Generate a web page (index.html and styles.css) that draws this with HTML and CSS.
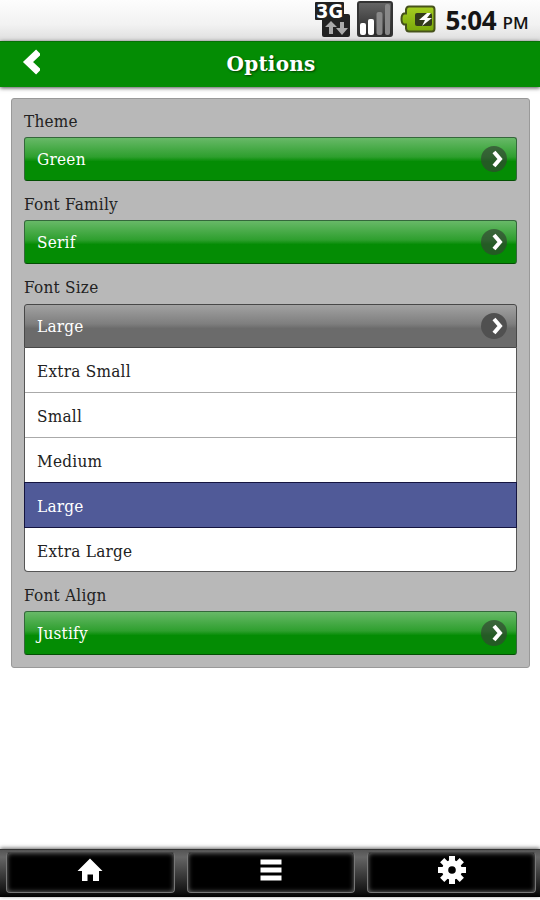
FILE: index.html
```
<!DOCTYPE html>
<html>
<head>
    <meta charset="utf-8">
    <title>Options</title>
    <meta name="viewport" content="width=device-width, initial-scale=1">
    <link rel="stylesheet" href="styles.css">
</head>
<body>
    <div class="status-bar">
        <svg class="network" width="36" height="38" viewBox="0 0 36 38">
            <rect x="8" y="14" width="28" height="23" rx="2" fill="#222"/>
            <rect x="1" y="2" width="29" height="18" rx="1" fill="#222"/>
            <text x="2" y="17.500" textLength="27" lengthAdjust="spacingAndGlyphs">3G</text>
            <path d="M17 21l6 6h-4v7h-4v-7h-4zM26 22h4v6h4l-6 7-6-7h4z" fill="#aaa"/>
        </svg>
        <svg class="signal" width="36" height="36" viewBox="0 0 36 36">
            <defs>
                <linearGradient id="signalBg" x2="0" y2="1">
                    <stop offset="0" stop-color="#666"/>
                    <stop offset="1" stop-color="#262626"/>
                </linearGradient>
            </defs>
            <rect x="1" y="1" width="34" height="34" rx="2" fill="url(#signalBg)" stroke="#333" stroke-width="2"/>
            <rect x="3" y="22" width="6" height="12" rx="2" fill="#fff"/>
            <rect x="11" y="18" width="6" height="16" rx="2" fill="#fff"/>
            <rect x="19.5" y="11" width="6" height="23" rx="2" fill="#888"/>
            <rect x="28" y="3" width="5" height="31" rx="2" fill="#888"/>
        </svg>
        <svg class="battery" width="36" height="28" viewBox="0 0 36 28">
            <defs>
                <linearGradient id="batteryBg" x2="0" y2="1">
                    <stop offset="0" stop-color="#a6ce22"/>
                    <stop offset="1" stop-color="#79a80a"/>
                </linearGradient>
            </defs>
            <path d="M9 1.500h23q2.500 0 2.500 3v19q0 3-2.500 3H9q-2.500 0-3-3v-4H4q-2.500-1-2.500-5.500T4 8.500h2v-4q.5-3 3-3z" fill="url(#batteryBg)" stroke="#46521b" stroke-width="2"/>
            <rect x="15" y="8" width="17" height="13" rx="2" fill="#333b1b"/>
            <path d="M27 8l-8 7h6l-3 6 10-8h-5l4-5z" fill="#fff"/>
        </svg>
        <span class="time">5:04</span>
        <span class="ampm">PM</span>
    </div>

    <div class="header">
        <svg class="back" width="20" height="28" viewBox="0 0 20 28">
            <path d="M18.500 4L8 14l10.500 10" fill="none" stroke="#fff" stroke-width="7"/>
        </svg>
        <h1>Options</h1>
    </div>

    <div class="panel">
        <label>Theme</label>
        <div class="select">
            <span>Green</span>
            <svg class="arrow" width="28" height="28" viewBox="0 0 28 28">
                <circle cx="14" cy="14" r="13"/>
                <path d="M14 7l6 7-6 7"/>
            </svg>
        </div>
        <label>Font Family</label>
        <div class="select">
            <span>Serif</span>
            <svg class="arrow" width="28" height="28" viewBox="0 0 28 28">
                <circle cx="14" cy="14" r="13"/>
                <path d="M14 7l6 7-6 7"/>
            </svg>
        </div>
        <label>Font Size</label>
        <div class="select open">
            <span>Large</span>
            <svg class="arrow" width="28" height="28" viewBox="0 0 28 28">
                <circle cx="14" cy="14" r="13"/>
                <path d="M14 7l6 7-6 7"/>
            </svg>
        </div>
        <ul class="options">
            <li>Extra Small</li>
            <li>Small</li>
            <li>Medium</li>
            <li class="selected">Large</li>
            <li>Extra Large</li>
        </ul>
        <label>Font Align</label>
        <div class="select">
            <span>Justify</span>
            <svg class="arrow" width="28" height="28" viewBox="0 0 28 28">
                <circle cx="14" cy="14" r="13"/>
                <path d="M14 7l6 7-6 7"/>
            </svg>
        </div>
    </div>

    <div class="footer">
        <div class="tab">
            <svg width="28" height="28" viewBox="0 0 28 28" fill="#fff">
                <path d="M14 2.500L26.500 15h-3.500v10H17v-6.500h-5.500V25H6V15H1.500z"/>
            </svg>
        </div>
        <div class="tab">
            <svg width="28" height="28" viewBox="0 0 28 28" fill="#fff">
                <path d="M3.500 3.500h21v5h-21zM3.500 11.500h21v5h-21zM3.500 19.500h21v5h-21z"/>
            </svg>
        </div>
        <div class="tab">
            <svg width="28" height="28" viewBox="0 0 28 28">
                <g stroke="#fff" stroke-width="6">
                    <path d="M14 0v28M0 14h28M4.200 4.200l19.600 19.600M23.800 4.200L4.200 23.800"/>
                </g>
                <circle cx="14" cy="14" r="10" fill="#fff"/>
                <circle cx="14" cy="14" r="3.800" fill="#000"/>
            </svg>
        </div>
    </div>
</body>
</html>
```
FILE: styles.css
```
* {
    box-sizing: border-box;
}
body {
    margin: 0;
    height: 900px;
    display: flex;
    flex-direction: column;
    background: #fff;
    color: #222;
    font-family: "DejaVu Serif Condensed", "DejaVu Serif", serif;
    font-size: 17px;
    letter-spacing: 0.25px;
    overflow: hidden;
}
.status-bar {
    display: flex;
    justify-content: flex-end;
    height: 41px;
    padding-right: 11px;
    background: linear-gradient(#fdfdfd, #f2f2f2 60%, #dedede);
    color: #151515;
    font-family: "Open Sans", sans-serif;
    font-weight: 600;
    line-height: 41px;
}
.network {
    margin-right: 7px;
}
.network text {
    font-family: "DejaVu Sans", sans-serif;
    font-size: 19px;
    font-weight: bold;
    letter-spacing: 0;
    fill: #fff;
}
.signal {
    margin: 1px 7px 0 0;
}
.battery {
    margin: 5px 10px 0 0;
}
.time {
    font-size: 26px;
    font-weight: 700;
    letter-spacing: -0.3px;
}
.ampm {
    margin-left: 6px;
    padding-top: 2px;
    font-size: 17px;
}
.header {
    display: flex;
    align-items: center;
    height: 46px;
    padding: 0 20px;
    background: #048c04;
    border-top: 1px solid #067006;
    box-shadow: 0 1px 4px rgba(0, 0, 0, 0.7);
}
.back {
    margin-bottom: 5px;
}
h1 {
    flex: 1;
    margin: 0 18px 2px 0;
    color: #fff;
    font-family: "DejaVu Serif", serif;
    font-size: 20px;
    font-weight: bold;
    letter-spacing: 0.2px;
    text-align: center;
    text-shadow: 1px 1px 2px #023d02;
}
.panel {
    margin: 11px 10px 0 11px;
    padding: 0 12px 12px;
    background: #b8b8b8;
    border: 1px solid #999;
    border-radius: 3px;
}
label {
    display: block;
    height: 39.300px;
    padding-top: 8px;
    line-height: 31px;
}
label:first-child {
    height: 38px;
    padding-top: 7px;
}
.select {
    display: flex;
    align-items: center;
    justify-content: space-between;
    height: 44px;
    padding: 0 8px 0 12px;
    background: linear-gradient(#68b968, #2e9f2e 45%, #048c04 56%, #048c04);
    border: 1px solid #34683b;
    border-bottom-color: #034f03;
    border-radius: 3px;
    color: #fff;
}
.arrow circle {
    fill: rgba(50, 70, 50, 0.7);
}
.arrow path {
    fill: none;
    stroke: #fff;
    stroke-width: 4;
}
.open {
    background: linear-gradient(#a2a2a2, #7e7e7e 45%, #6b6b6b 56%, #6b6b6b);
    border-color: #484848;
    border-radius: 3px 3px 0 0;
}
.open circle {
    fill: #505050;
}
.options {
    margin: 0;
    padding: 0;
    list-style: none;
    background: #fff;
    border: 1px solid #555;
    border-top: 0;
    border-radius: 0 0 4px 4px;
}
.options li {
    height: 45px;
    padding-left: 12px;
    border-bottom: 1px solid #aaa;
    line-height: 47px;
}
.options li:last-child {
    height: 43px;
    border-bottom: 0;
}
.options .selected {
    margin: -1px -1px 0;
    height: 46px;
    padding-left: 12px;
    border: 1px solid #151540;
    background: #505a98;
    color: #fff;
}
.footer {
    display: flex;
    gap: 12px;
    height: 48px;
    margin: auto 0 3px;
    padding: 2px 4px 4px 6px;
    background: linear-gradient(#555, #666 15%, #333 60%, #111 90%, #000);
    border-top: 1px solid #333;
    box-shadow: 0 -1px 4px rgba(0, 0, 0, 0.6);
}
.tab {
    flex: 1;
    display: flex;
    align-items: center;
    justify-content: center;
    padding-bottom: 5px;
    background: #000;
    border: 1px solid #777;
    border-top-color: #444;
    border-radius: 4px;
    box-shadow: inset 0 0 5px #777;
}
```
